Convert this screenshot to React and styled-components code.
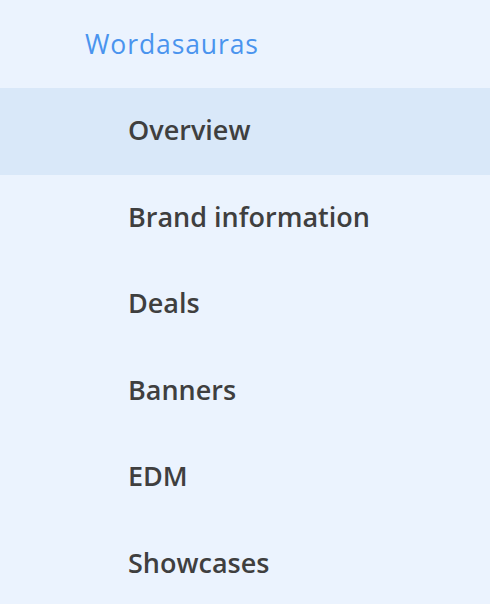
import styled, { createGlobalStyle } from "styled-components";

const GlobalStyle = createGlobalStyle`
  html, body {
    margin: 0;
    padding: 0;
    background: #ebf3fe;
  }
  body {
    font-family: "Open Sans", "Noto Sans", sans-serif;
  }
`;

const items = [
  "Overview",
  "Brand information",
  "Deals",
  "Banners",
  "EDM",
  "Showcases",
];

const App = () => {
  return (
    <>
      <GlobalStyle />
      <Sidebar>
        <Brand>Wordasauras</Brand>
        <Menu>
          {items.map((label, i) => (
            <MenuItem key={label} active={i === 0}>
              {label}
            </MenuItem>
          ))}
        </Menu>
      </Sidebar>
    </>
  );
};
export default App;

const Sidebar = styled.nav`
  width: 490px;
  height: 604px;
  overflow: hidden;
  background: #ebf3fe;
  display: flex;
  flex-direction: column;
`;

const Brand = styled.div`
  height: 88px;
  flex-shrink: 0;
  display: flex;
  align-items: center;
  padding-left: 85px;
  font-size: 26.5px;
  color: #4a94ee;
  letter-spacing: 0.9px;
`;

const Menu = styled.ul`
  list-style: none;
  margin: 0;
  padding: 0;
`;

const MenuItem = styled.li.withConfig({
  shouldForwardProp: (p) => p !== "active",
})`
  height: 86.5px;
  box-sizing: border-box;
  padding-bottom: 3px;
  display: flex;
  align-items: center;
  padding-left: 128px;
  font-size: 27px;
  font-weight: 600;
  color: #3f3f3f;
  background: ${(p) => (p.active ? "#d9e8f9" : "transparent")};
`;
